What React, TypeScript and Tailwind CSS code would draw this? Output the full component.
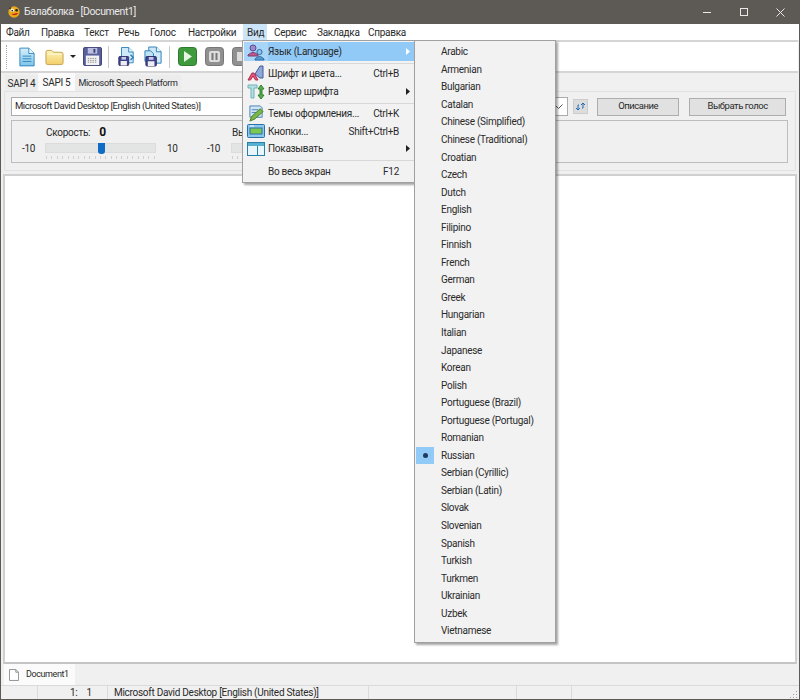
import { ReactNode } from "react";

const languages = [
  "Arabic", "Armenian", "Bulgarian", "Catalan", "Chinese (Simplified)", "Chinese (Traditional)", "Croatian", "Czech",
  "Dutch", "English", "Filipino", "Finnish", "French", "German", "Greek", "Hungarian", "Italian", "Japanese", "Korean",
  "Polish", "Portuguese (Brazil)", "Portuguese (Portugal)", "Romanian", "Russian", "Serbian (Cyrillic)", "Serbian (Latin)",
  "Slovak", "Slovenian", "Spanish", "Turkish", "Turkmen", "Ukrainian", "Uzbek", "Vietnamese",
];

const menusLeft = [
  { name: "Файл", w: "w-[35px]" },
  { name: "Правка", w: "w-[43px]" },
  { name: "Текст", w: "w-[34px]" },
  { name: "Речь", w: "w-[32px]" },
  { name: "Голос", w: "w-[38px]" },
  { name: "Настройки", w: "w-[59px]" },
];

const menusRight = [
  { name: "Сервис", w: "w-[43px]" },
  { name: "Закладка", w: "w-[51px]" },
  { name: "Справка", w: "w-[50px]" },
];

function Logo() {
  return (
    <svg width="14" height="14" viewBox="0 0 16 16">
      <circle cx="8" cy="8" r="6.500" fill="#e8a818" />
      <circle cx="6" cy="6" r="2" fill="#fff" />
      <circle cx="6" cy="6.300" r="1" fill="#222" />
      <circle cx="11" cy="6" r="1.500" fill="#222" />
      <path d="M5 10 Q9 14 13 9 L11 9 Q8 10 5 10Z" fill="#c8281c" />
      <path d="M2 4 L5 2 L4 5Z" fill="#333" />
    </svg>
  );
}

function NewDoc() {
  return (
    <svg width="16" height="20" viewBox="0 0 18 22">
      <defs>
        <linearGradient id="docg" x1="0" y1="0" x2="0" y2="1">
          <stop offset="0" stopColor="#d8f0fb" />
          <stop offset="1" stopColor="#7cc4ea" />
        </linearGradient>
      </defs>
      <path d="M1 1h10l6 6v14H1z" fill="url(#docg)" stroke="#2b7fb8" />
      <path d="M11 1v6h6" fill="#eef9ff" stroke="#2b7fb8" />
      <path d="M4 10h10M4 13h10M4 16h10" stroke="#2b7fb8" />
    </svg>
  );
}

function Folder() {
  return (
    <svg width="19" height="18" viewBox="0 0 20 18">
      <defs>
        <linearGradient id="foldg" x1="0" y1="0" x2="0" y2="1">
          <stop offset="0" stopColor="#fff3b8" />
          <stop offset="1" stopColor="#f2cf68" />
        </linearGradient>
      </defs>
      <path d="M1 4q0-2 2-2h4l2 2h8q2 0 2 2v9q0 2-2 2H3q-2 0-2-2z" fill="url(#foldg)" stroke="#bfa24e" />
      <path d="M3 6h14" stroke="#fffbe0" />
    </svg>
  );
}

function Floppy() {
  return (
    <svg width="19" height="19" viewBox="0 0 20 20">
      <rect x="0.500" y="0.500" width="19" height="19" rx="1.500" fill="#5a5f9c" stroke="#3c3f73" />
      <rect x="5" y="1" width="10" height="6" fill="#b9bfe0" />
      <rect x="11" y="2" width="2" height="4" fill="#3c3f73" />
      <rect x="3" y="9" width="14" height="10" fill="#f3f3f3" />
      <path d="M5 12h10M5 14h10M5 16h10" stroke="#8a8a8a" strokeDasharray="1.500 1" />
    </svg>
  );
}

function SaveAs({ second }: { second?: boolean }) {
  return (
    <svg width={second ? 19 : 18} height="21" viewBox="0 0 20 22">
      <path d="M5 1h8l5 5v12H5z" fill="#cfe9f8" stroke="#2b7fb8" />
      <path d="M13 1v5h5" fill="#eef9ff" stroke="#2b7fb8" />
      {second && <path d="M1 5h6l3 3v8H1z" fill="#bfe2f5" stroke="#2b7fb8" />}
      <rect x="2" y="11" width="11" height="10" rx="1" fill="#3f4390" stroke="#2d2f68" />
      <rect x="5" y="11.500" width="5" height="3" fill="#c4c8e6" />
      <rect x="4" y="16" width="7" height="5" fill="#eee" />
      {!second && <path d="M15 9l3 3-3 3" fill="none" stroke="#2b7fb8" strokeWidth="1.500" />}
    </svg>
  );
}

function MediaBtn({ fill, stroke, children }: { fill: string; stroke: string; children: ReactNode }) {
  return (
    <svg width="19" height="19" viewBox="0 0 19 19">
      <rect x="0.500" y="0.500" width="18" height="18" rx="3" fill={fill} stroke={stroke} />
      {children}
    </svg>
  );
}

function LangIcon() {
  return (
    <svg width="18" height="18" viewBox="0 0 18 18">
      <circle cx="6" cy="5" r="3" fill="#9a8ac8" stroke="#5a4a98" />
      <path d="M1 12q5-5 10 0v1H1z" fill="#c05a8a" stroke="#7a3a70" />
      <circle cx="12.500" cy="9" r="2.600" fill="#8ec4e8" stroke="#2c6ea8" />
      <path d="M8 16q4.500-5 9 0v1H8z" fill="#5a9ad0" stroke="#2c6ea8" />
    </svg>
  );
}

function FontIcon() {
  return (
    <svg width="18" height="18" viewBox="0 0 18 18">
      <path d="M8 10l5-8h3v12h-3z" fill="#8fa8d8" stroke="#3f5a9c" />
      <path d="M1 16l4-7h2l4 7H8.500L6 12l-2.500 4z" fill="#e25a78" stroke="#b02a50" />
    </svg>
  );
}

function SizeIcon() {
  return (
    <svg width="18" height="18" viewBox="0 0 18 18">
      <path d="M1 2h9v3H7v10H4V5H1z" fill="#b4e0e4" stroke="#70b0b8" />
      <path d="M14 2l3 4h-2v6h2l-3 4-3-4h2V6h-2z" fill="#58b048" stroke="#2f8030" />
    </svg>
  );
}

function ThemeIcon() {
  return (
    <svg width="17" height="17" viewBox="0 0 18 18">
      <path d="M2 1h11l2 2v10H2z" fill="#cfe4f5" stroke="#4a80b0" />
      <path d="M4 5h7M4 8h5" stroke="#4a80b0" />
      <path d="M2 17l2-5 9-8 3 3-9 8z" fill="#7ab648" stroke="#47802a" />
    </svg>
  );
}

function ButtonsIcon() {
  return (
    <svg width="18" height="16" viewBox="0 0 18 16">
      <rect x="0.500" y="1.500" width="17" height="13" rx="1" fill="#8cc8ec" stroke="#2b70a8" />
      <rect x="3" y="5" width="12" height="6" fill="#7ec850" stroke="#2b70a8" />
      <path d="M3 3h4" stroke="#fff" />
    </svg>
  );
}

function ShowIcon() {
  return (
    <svg width="18" height="14" viewBox="0 0 18 14">
      <rect x="0.500" y="0.500" width="17" height="13" fill="#e8f6fb" stroke="#2b80a8" />
      <rect x="1" y="1" width="16" height="3" fill="#58b0d0" />
      <path d="M10.500 4v9" stroke="#2b80a8" />
    </svg>
  );
}

function Arrow({ color = "#222" }: { color?: string }) {
  return (
    <svg width="4" height="7" viewBox="0 0 4 7">
      <path d="M0 0l4 3.500L0 7z" fill={color} />
    </svg>
  );
}

function MenuRow({ icon, label, shortcut, arrow, active, y }: { icon?: ReactNode; label: string; shortcut?: string; arrow?: boolean; active?: boolean; y: string }) {
  return (
    <div className={`flex items-center ${y} ${active ? "bg-[#91c9f7]" : ""}`}>
      <div className={`w-[24px] h-full flex items-center justify-center shrink-0 ${active ? "bg-[#a9d5f8]" : ""}`}>{icon}</div>
      <span className="flex-1 whitespace-nowrap">{label}</span>
      {shortcut && <span className="whitespace-nowrap">{shortcut}</span>}
      <div className="w-[15px] shrink-0 flex justify-center pl-[3px]">{arrow && <Arrow color={active ? "#fff" : "#222"} />}</div>
    </div>
  );
}

function Ticks() {
  return (
    <div className="flex justify-between w-full h-[3px] px-[1px]">
      {Array.from({ length: 21 }).map((_, i) => (
        <div key={i} className="w-[1px] h-full bg-[#d0d0d0]" />
      ))}
    </div>
  );
}

function Slider({ label, width }: { label: string; width: string }) {
  return (
    <div className={`flex flex-col shrink-0 ${width}`}>
      <div className="flex items-baseline gap-[9px] h-[18px] pl-[1px]">
        <span className="whitespace-nowrap">{label}</span>
        <span className="font-bold text-[12px] text-[#111]">0</span>
      </div>
      <div className="relative h-[10px] mt-[2px] bg-[#e3e4e4] border border-[#dcdcdc]">
        <div className="absolute left-[52px] top-[-1px] w-[7px] h-[11px] bg-[#0f6cc4] rounded-b-[3px]" />
      </div>
      <div className="mt-[3px]">
        <Ticks />
      </div>
    </div>
  );
}

export default function App() {
  return (
    <div className="relative w-[800px] h-[700px] overflow-hidden flex flex-col bg-[#f0f0f0] text-[#2a2a2a] text-[10px] tracking-[-0.28px] font-['Roboto','Liberation_Sans',sans-serif]">
      {/* title bar */}
      <div className="h-[24px] shrink-0 bg-[#5d5a56] flex items-center text-[#e9e9e9] text-[10.500px] tracking-[-0.4px]">
        <div className="ml-[7px] mr-[3px] flex"><Logo /></div>
        <span className="flex-1 whitespace-nowrap">Балаболка - [Document1]</span>
        <div className="flex items-center mr-[1px]">
          <div className="w-[37px] flex justify-center"><div className="w-[8px] h-[1px] bg-[#e9e9e9]" /></div>
          <div className="w-[37px] flex justify-center"><div className="w-[8px] h-[8px] border border-[#e9e9e9]" /></div>
          <div className="w-[37px] flex justify-center">
            <svg width="9" height="9" viewBox="0 0 9 9"><path d="M0.500 0.500l8 8M8.500 0.500l-8 8" stroke="#e9e9e9" /></svg>
          </div>
        </div>
      </div>

      <div className="flex-1 flex flex-col min-h-0 border-x border-b border-[#5d5a56]">
        {/* menu bar */}
        <div className="h-[16px] shrink-0 bg-white flex items-center pl-[5px]">
          {menusLeft.map((m) => (
            <span key={m.name} className={`whitespace-nowrap ${m.w}`}>{m.name}</span>
          ))}
          <div className="w-[31px] -ml-[4px] h-full shrink-0">
            <div className="w-[24px] h-full pl-[4px] flex items-center bg-[#cce4f7]">Вид</div>
          </div>
          {menusRight.map((m) => (
            <span key={m.name} className={`whitespace-nowrap ${m.w}`}>{m.name}</span>
          ))}
        </div>

        {/* toolbar */}
        <div className="h-[33px] shrink-0 mr-[1px] bg-white border-y-2 border-[#d5d5d5] flex items-center">
          <div className="ml-[5px] mr-[12px] h-[24px] border-l border-dotted border-[#a8a8a8]" />
          <NewDoc />
          <div className="ml-[10px]"><Folder /></div>
          <div className="ml-[6px] w-0 h-0 border-x-[3px] border-x-transparent border-t-[3px] border-t-[#222]" />
          <div className="ml-[7px]"><Floppy /></div>
          <div className="mx-[6px] w-[1px] h-[22px] bg-[#c8c8c8]" />
          <div className="ml-[2px]"><SaveAs /></div>
          <div className="ml-[9px]"><SaveAs second /></div>
          <div className="mx-[6px] w-[1px] h-[22px] bg-[#c8c8c8]" />
          <div className="ml-[2px]">
            <MediaBtn fill="#3f9a3c" stroke="#2c7a2c"><path d="M6 4l8 5.500-8 5.500z" fill="#e8f5e0" /></MediaBtn>
          </div>
          <div className="ml-[8px]">
            <MediaBtn fill="#909090" stroke="#777"><rect x="4" y="4" width="11" height="11" rx="2" fill="#ddd" /><path d="M7.500 6v7M11.500 6v7" stroke="#777" strokeWidth="2" /></MediaBtn>
          </div>
          <div className="ml-[8px]">
            <MediaBtn fill="#909090" stroke="#777"><rect x="5" y="5" width="9" height="9" fill="#ddd" /></MediaBtn>
          </div>
        </div>

        {/* voice tabs */}
        <div className="h-[17px] shrink-0 mt-[1px] flex items-end pl-[4px]">
          <div className="w-[33px] h-[16px] pt-[1px] shrink-0 flex items-center justify-center bg-[#ececec] whitespace-nowrap">SAPI 4</div>
          <div className="w-[37px] h-[18px] shrink-0 flex items-center justify-center bg-[#fafafa] whitespace-nowrap">SAPI 5</div>
          <div className="w-[106px] h-[16px] pt-[2px] shrink-0 flex items-center justify-center bg-[#ececec] whitespace-nowrap text-[9px] tracking-[-0.35px]">Microsoft Speech Platform</div>
        </div>

        {/* voice panel */}
        <div className="h-[80px] shrink-0 mx-[3px] border border-[#e2e2e2] bg-[#f0f0f0] pt-[5px] pl-[6px] pr-[9px]">
          <div className="flex items-center h-[19px]">
            <div className="w-[558px] h-[19px] bg-white border border-[#acacac] flex items-center pl-[3px] pr-[4px] justify-between text-[9.500px] tracking-[-0.45px]">
              <span className="whitespace-nowrap">Microsoft David Desktop [English (United States)]</span>
              <svg width="9" height="5" viewBox="0 0 9 5"><path d="M0.500 0.500l4 4 4-4" stroke="#555" fill="none" /></svg>
            </div>
            <div className="ml-[5px] w-[15px] h-[15px] bg-[#dcdcdc] border border-[#ccc] flex items-center justify-center">
              <svg width="11" height="9" viewBox="0 0 11 9"><path d="M1 6l2 2 2-2M3 7V3h1M10 3L8 1 6 3M8 2v4H7" stroke="#1e6cb8" fill="none" /></svg>
            </div>
            <div className="ml-[9px] w-[82px] h-[18px] bg-[#e1e1e1] border border-[#adadad] flex items-center justify-center text-[9.500px] tracking-[-0.45px]">Описание</div>
            <div className="ml-[10px] w-[97px] h-[18px] bg-[#e1e1e1] border border-[#adadad] flex items-center justify-center text-[9.500px] tracking-[-0.45px]">Выбрать голос</div>
          </div>
          <div className="mt-[4px] h-[43px] w-[777px] border border-[#bdbdbd] flex pt-[2px] pl-[10px]">
            <div className="w-[23px] pt-[18px] shrink-0">-10</div>
            <Slider label="Скорость:" width="w-[111px]" />
            <div className="w-[51px] pl-[11px] pt-[18px] shrink-0">10</div>
            <div className="w-[24px] pt-[18px] shrink-0">-10</div>
            <Slider label="Высота:" width="w-[111px]" />
          </div>
        </div>

        {/* editor */}
        <div className="flex-1 min-h-0 mt-[3px] mx-[2px] bg-white border-2 border-[#d0d0d0] border-b-[#c4c4c4]" />

        {/* document tabs */}
        <div className="h-[21px] shrink-0 pl-[3px] flex">
          <div className="w-[71px] bg-[#fbfbfb] flex items-center pl-[5px] gap-[7px] text-[9px] tracking-[-0.4px]">
            <svg className="shrink-0" width="10" height="12" viewBox="0 0 11 13"><path d="M0.500 0.500h7l3 3v9h-10z" fill="#fff" stroke="#8a8a8a" /><path d="M7.500 0.500v3h3" fill="none" stroke="#8a8a8a" /></svg>
            <span className="whitespace-nowrap">Document1</span>
          </div>
        </div>

        {/* status bar */}
        <div className="relative h-[14px] shrink-0 border-t border-[#dadada] flex items-center">
          <div className="w-[37px] h-full border-r border-[#dadada]" />
          <div className="w-[70px] h-full border-r border-[#dadada] flex items-center pl-[32px] gap-[9px]">
            <span>1:</span><span>1</span>
          </div>
          <div className="w-[261px] h-full border-r border-[#dadada] flex items-center pl-[6px] whitespace-nowrap">Microsoft David Desktop [English (United States)]</div>
          <div className="w-[148px] h-full border-r border-[#dadada]" />
          <div className="w-[55px] h-full border-r border-[#dadada]" />
          <svg className="absolute right-[1px] bottom-[1px]" width="8" height="8" viewBox="0 0 8 8">
            <path d="M6 1h1v1H6zM3 4h1v1H3zM6 4h1v1H6zM0 7h1v1H0zM3 7h1v1H3zM6 7h1v1H6z" fill="#a0a0a0" />
          </svg>
        </div>
      </div>

      {/* open view menu */}
      <div className="absolute left-[242px] top-[40px] w-[173px] h-[143px] bg-[#f2f2f2] border border-[#a0a0a0] shadow-[2px_2px_2px_rgba(0,0,0,0.35)] pt-[1px] pl-[1px]">
        <MenuRow y="h-[19px]" icon={<LangIcon />} label="Язык (Language)" arrow active />
        <div className="h-[2px]" />
        <div className="h-[1px] bg-[#d8d8d8] ml-[25px]" />
        <MenuRow y="h-[18px]" icon={<FontIcon />} label="Шрифт и цвета..." shortcut="Ctrl+B" />
        <MenuRow y="h-[17.500px] mt-[1px]" icon={<SizeIcon />} label="Размер шрифта" arrow />
        <div className="h-[2px]" />
        <div className="h-[1px] bg-[#d8d8d8] ml-[25px] mb-[1px]" />
        <MenuRow y="h-[18px]" icon={<ThemeIcon />} label="Темы оформления..." shortcut="Ctrl+K" />
        <MenuRow y="h-[17.500px]" icon={<ButtonsIcon />} label="Кнопки..." shortcut="Shift+Ctrl+B" />
        <MenuRow y="h-[17.500px]" icon={<ShowIcon />} label="Показывать" arrow />
        <div className="h-[2px]" />
        <div className="h-[1px] bg-[#d8d8d8] ml-[25px] mb-[2px]" />
        <MenuRow y="h-[18px]" label="Во весь экран" shortcut="F12" />
      </div>

      {/* language submenu */}
      <div className="absolute left-[414px] top-[40px] w-[142px] h-[603px] bg-[#f2f2f2] border border-[#a0a0a0] shadow-[2px_2px_2px_rgba(0,0,0,0.35)] pt-[2px] pl-[1px]">
        {languages.map((lang) => (
          <div key={lang} className="flex items-center h-[17.550px]">
            <div className={`w-[18px] h-full flex items-center justify-center ${lang === "Russian" ? "bg-[#91c9f7]" : ""}`}>
              {lang === "Russian" && <div className="w-[5px] h-[5px] rounded-full bg-[#1f3a5c]" />}
            </div>
            <span className="ml-[7px] whitespace-nowrap">{lang}</span>
          </div>
        ))}
      </div>
    </div>
  );
}
